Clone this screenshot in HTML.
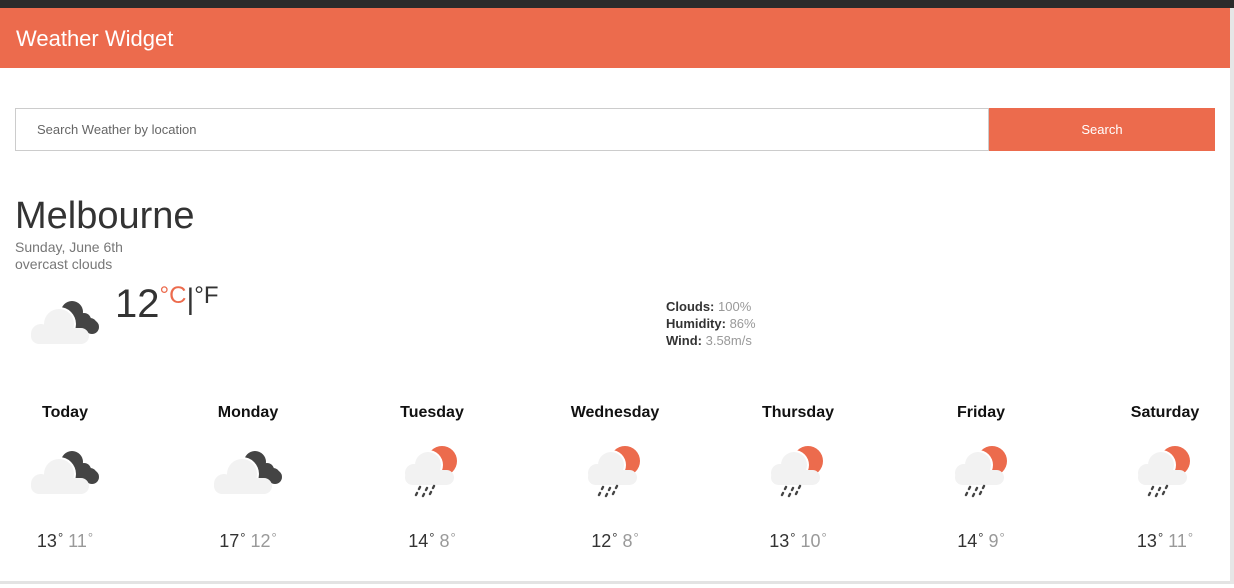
<!DOCTYPE html>
<html><head><meta charset="utf-8"><style>
body{margin:0;width:1234px;height:588px;background:#fff;font-family:"Liberation Sans",sans-serif;position:relative;overflow:hidden;color:#333}
.top{position:absolute;left:0;top:0;width:1234px;height:8px;background:#2b2b2b}
.hdr{position:absolute;left:0;top:8px;width:1230px;height:60px;background:#ec6b4d;color:#fff;font-size:22px;line-height:62px;padding-left:16px;box-sizing:border-box}
.edge{position:absolute;left:1230px;top:8px;width:4px;height:576px;background:#e6e6e6}
.bot{position:absolute;left:0;top:581px;width:1230px;height:3px;background:#e3e3e3}
.inp{position:absolute;left:15px;top:108px;width:974px;height:43px;border:1px solid #ccc;box-sizing:border-box;font-size:13px;color:#666;line-height:41px;padding-left:21px}
.btn{position:absolute;left:989px;top:108px;width:226px;height:43px;background:#ec6b4d;color:#fff;font-size:13px;text-align:center;line-height:43px}
.city{position:absolute;left:15px;top:195px;font-size:38px;color:#333}
.sub{position:absolute;left:15px;font-size:14px;color:#777}
.temp{position:absolute;left:115px;top:282px;font-size:40px;color:#333}
.det{position:absolute;left:666px;top:298px;font-size:13px;line-height:17px;color:#999}
.det b{color:#333}
.day{position:absolute;top:404px;width:180px;margin-left:-90px;text-align:center;font-weight:bold;font-size:16px;color:#111}
.ic{position:absolute;overflow:visible}
.t{position:absolute;top:530px;width:120px;margin-left:-60px;text-align:center;font-size:18px;color:#333}
.t span{color:#999}
.t i{font-style:normal;font-size:13px;vertical-align:5px;margin-left:1px}
</style></head><body>
<div class="top"></div>
<div class="hdr">Weather Widget</div>
<div class="edge"></div><div class="bot"></div>
<div class="inp">Search Weather by location</div>
<div class="btn">Search</div>
<div class="city">Melbourne</div>
<div class="sub" style="top:239px">Sunday, June 6th</div>
<div class="sub" style="top:256px">overcast clouds</div>
<svg width="0" height="0" style="position:absolute"><defs>
<g id="cd"><circle cx="43" cy="12" r="11" fill="#444"/><circle cx="55" cy="20" r="7" fill="#444"/><circle cx="63" cy="27" r="7" fill="#444"/><rect x="40" y="18" width="28" height="14" rx="7" fill="#444"/>
<circle cx="30" cy="24" r="17" fill="#fff"/><circle cx="30" cy="24" r="15" fill="#f2f2f2"/><circle cx="12" cy="34" r="10" fill="#f2f2f2"/><rect x="2" y="28" width="58" height="16" rx="8" fill="#f2f2f2"/></g>
<g id="rs"><circle cx="39" cy="16" r="15" fill="#ec6b4d"/><circle cx="25" cy="20" r="15" fill="#fff"/><circle cx="25" cy="20" r="13" fill="#f2f2f2"/><circle cx="11" cy="28" r="9" fill="#f2f2f2"/><rect x="2" y="25" width="49" height="15" rx="7.5" fill="#f2f2f2"/>
<g stroke="#444" stroke-width="2.4" stroke-linecap="round"><line x1="17" y1="42" x2="16" y2="44"/><line x1="14" y1="48" x2="13" y2="50"/><line x1="24" y1="43" x2="23" y2="45"/><line x1="21" y1="49" x2="20" y2="51"/><line x1="31" y1="41" x2="30" y2="43"/><line x1="28" y1="47" x2="27" y2="49"/></g></g>
</defs></svg>
<svg class="ic" style="left:29px;top:300px" width="75" height="46"><use href="#cd"/></svg>
<div class="temp">12<span style="color:#ec6b4d;font-size:24px;vertical-align:14px">°C</span><span style="font-size:30px;vertical-align:8px">|</span><span style="font-size:24px;vertical-align:14px">°F</span></div>
<div class="det"><b>Clouds:</b> 100%<br><b>Humidity:</b> 86%<br><b>Wind:</b> 3.58m/s</div>

<div class="day" style="left:65px">Today</div>
<div class="day" style="left:248px">Monday</div>
<div class="day" style="left:432px">Tuesday</div>
<div class="day" style="left:615px">Wednesday</div>
<div class="day" style="left:798px">Thursday</div>
<div class="day" style="left:981px">Friday</div>
<div class="day" style="left:1165px">Saturday</div>

<svg class="ic" style="left:29px;top:450px" width="75" height="46"><use href="#cd"/></svg>
<svg class="ic" style="left:212px;top:450px" width="75" height="46"><use href="#cd"/></svg>
<svg class="ic" style="left:403px;top:445px" width="58" height="54"><use href="#rs"/></svg>
<svg class="ic" style="left:586px;top:445px" width="58" height="54"><use href="#rs"/></svg>
<svg class="ic" style="left:769px;top:445px" width="58" height="54"><use href="#rs"/></svg>
<svg class="ic" style="left:953px;top:445px" width="58" height="54"><use href="#rs"/></svg>
<svg class="ic" style="left:1136px;top:445px" width="58" height="54"><use href="#rs"/></svg>

<div class="t" style="left:65px">13<i>°</i> <span>11<i>°</i></span></div>
<div class="t" style="left:248px">17<i>°</i> <span>12<i>°</i></span></div>
<div class="t" style="left:432px">14<i>°</i> <span>8<i>°</i></span></div>
<div class="t" style="left:615px">12<i>°</i> <span>8<i>°</i></span></div>
<div class="t" style="left:798px">13<i>°</i> <span>10<i>°</i></span></div>
<div class="t" style="left:981px">14<i>°</i> <span>9<i>°</i></span></div>
<div class="t" style="left:1165px">13<i>°</i> <span>11<i>°</i></span></div>
</body></html>
